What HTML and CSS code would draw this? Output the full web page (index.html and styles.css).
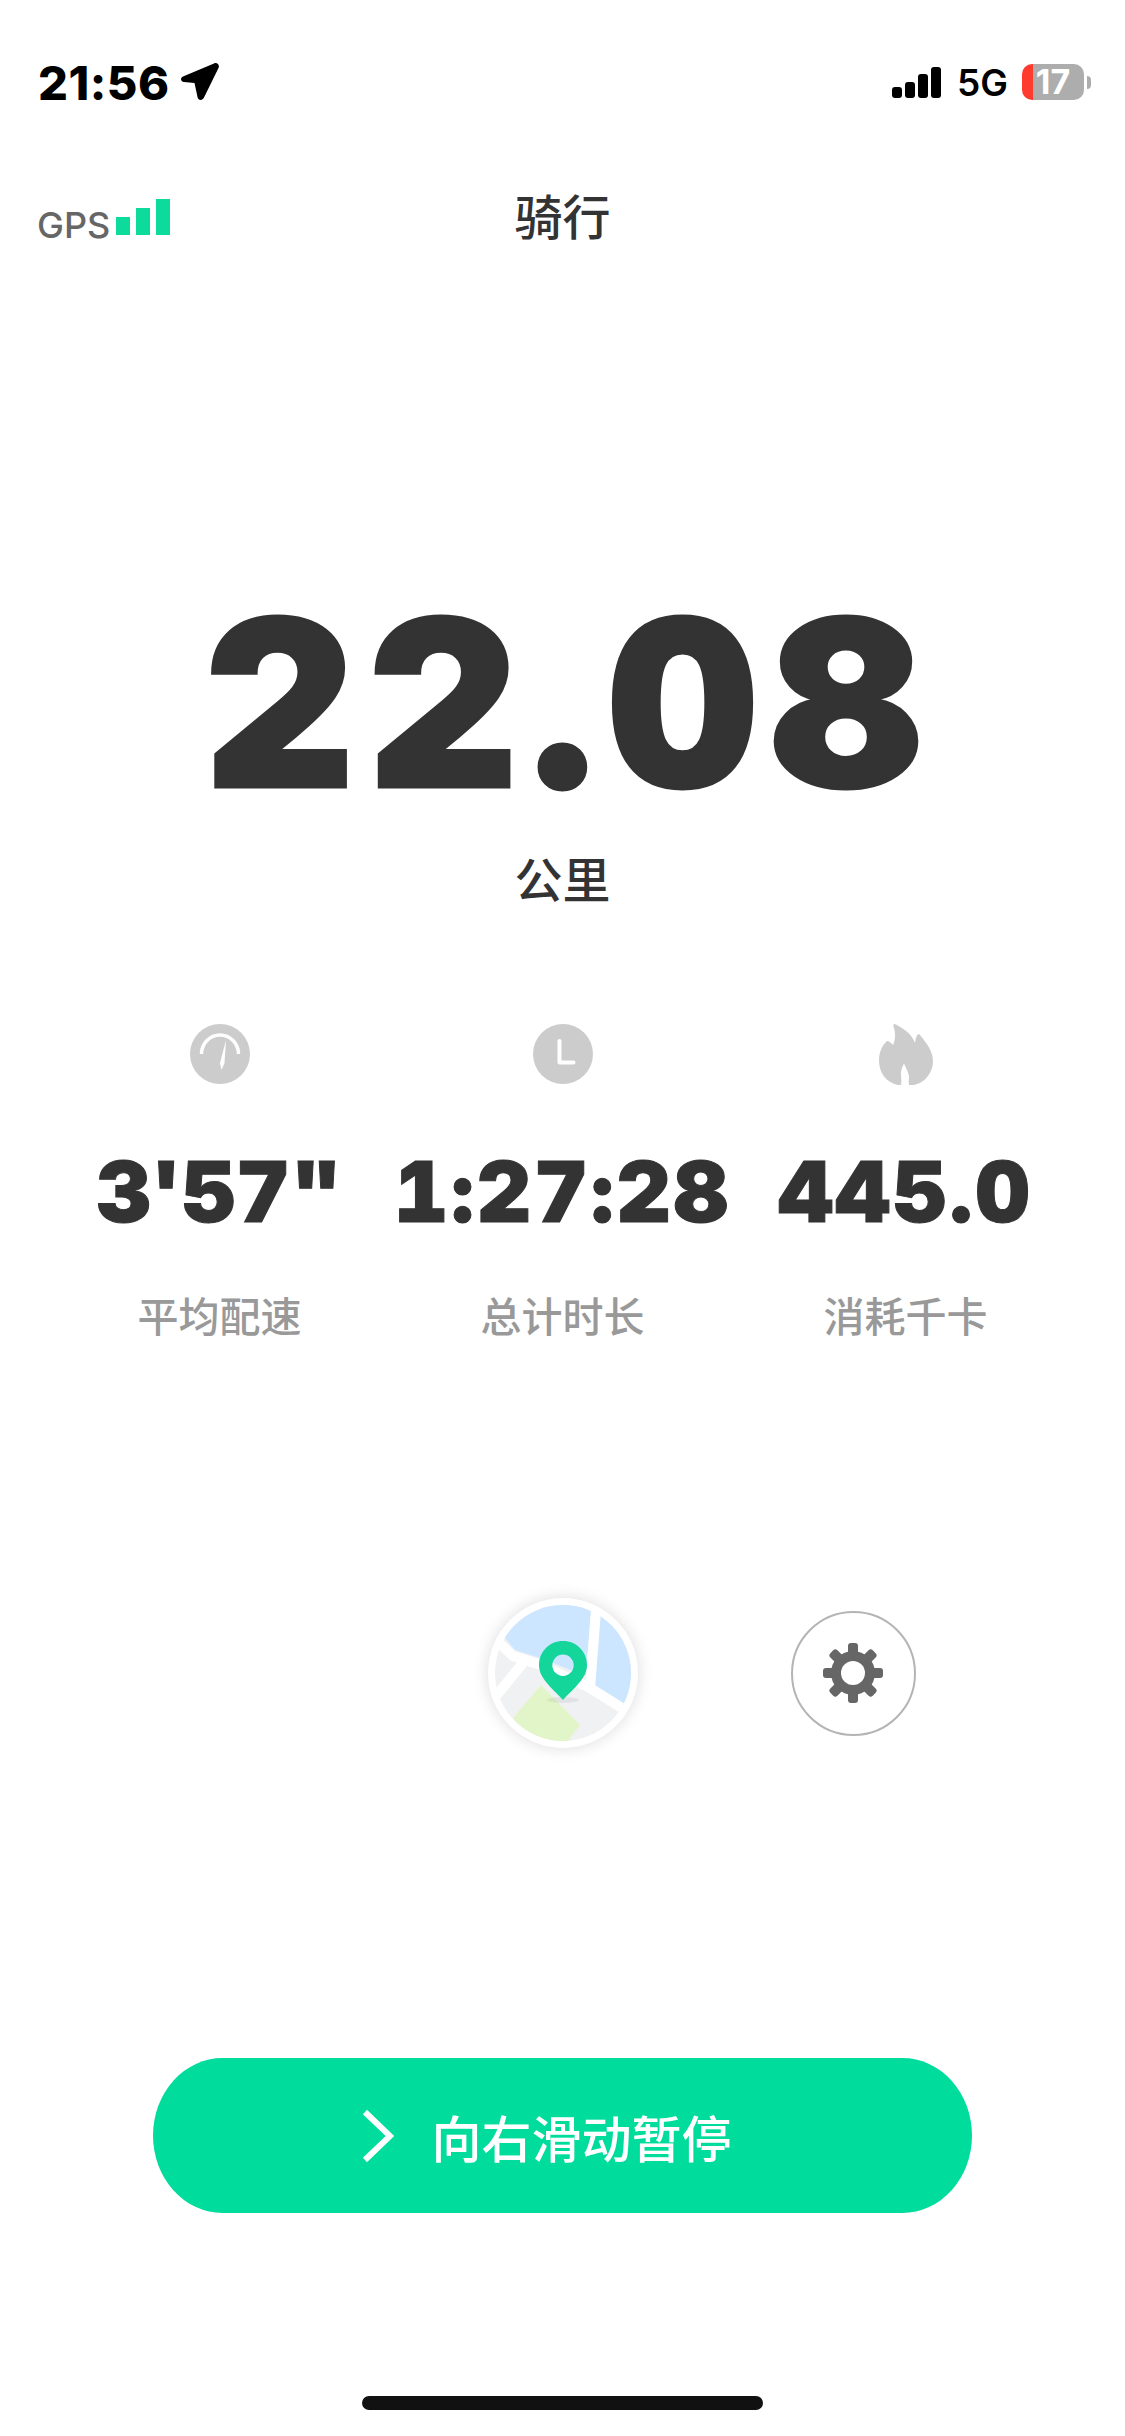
FILE: index.html
```html
<!DOCTYPE html>
<html lang="zh-CN">
<head>
    <meta charset="UTF-8">
    <title>骑行</title>
    <link rel="stylesheet" href="styles.css">
</head>
<body>
    <div class="screen">
        <div class="status-bar">
            <div class="status-left">
                <span class="clock">21:56</span>
                <svg class="arrow" width="40" height="38" viewBox="0 0 40 38"><path d="M34 .5 3 13.500c-3 1.500-2.500 5 1 5.500l10.500 1 3 14c.5 3.500 5 4 6.500 .5L38.500 5c1.500-3-1.500-6-4.500-4.500Z"/></svg>
            </div>
            <div class="status-right">
                <div class="signal"><i class="s1"></i><i class="s2"></i><i class="s3"></i><i class="s4"></i></div>
                <span class="network">5G</span>
                <div class="battery"><span>17</span></div>
                <div class="battery-nub"></div>
            </div>
        </div>

        <div class="nav">
            <div class="gps">
                <span>GPS</span>
                <div class="gps-bars"><i class="g1"></i><i class="g2"></i><i class="g3"></i></div>
            </div>
            <div class="title">骑行</div>
        </div>

        <div class="distance">22.08</div>
        <div class="unit">公里</div>

        <div class="stats">
            <div class="stat">
                <svg width="60" height="62" viewBox="0 0 60 62">
                    <circle cx="30" cy="31" r="30" fill="#ccc"/>
                    <path d="M11.500 31a18.500 19 0 0 1 37 0" fill="none" stroke="#fff" stroke-width="3.500"/>
                    <path d="M36 17 34.500 40 31.500 47 30 40Z" fill="#fff"/>
                </svg>
                <div class="stat-value stat-value-tight">3'57"</div>
                <div class="stat-label">平均配速</div>
            </div>
            <div class="stat">
                <svg width="60" height="62" viewBox="0 0 60 62">
                    <circle cx="30" cy="31" r="30" fill="#ccc"/>
                    <path d="M26.500 18v21.500h14" fill="none" stroke="#fff" stroke-width="4" stroke-linecap="round" stroke-linejoin="round"/>
                </svg>
                <div class="stat-value">1:27:28</div>
                <div class="stat-label">总计时长</div>
            </div>
            <div class="stat">
                <svg width="60" height="62" viewBox="0 0 60 62">
                    <path d="M18 .7c9 4 18 10 21 19.300.5-3 1.500-9 4-9 7 8 14 17 14 27 0 13-10 24-23 24.500-1.500 0-1.500-3-1-8 .3-4-3-9-5-14-2 4-3.500 8-3 12 .3 4 1 10-1 10C10 60 3 50 3 37c0-7 3-15 8-19 2 0 4 2 6 4 2-4 3-11 1-17-1-2-1-4 1-4.300Z" fill="#ccc"/>
                </svg>
                <div class="stat-value">445.0</div>
                <div class="stat-label">消耗千卡</div>
            </div>
        </div>

        <div class="controls">
            <div class="map-btn">
                <svg width="136" height="136" viewBox="7 7 136 136">
                    <defs><clipPath id="mapClip"><circle cx="75" cy="75" r="68"/></clipPath></defs>
                    <g clip-path="url(#mapClip)">
                        <rect width="150" height="150" fill="#f0f1f3"/>
                        <path d="M17 40 27 52 52 60 98 78 103 13 90 0 0 0Z" fill="#cce6ff"/>
                        <path d="M114 0 105 88 135 107 150 100 150 0Z" fill="#cce6ff"/>
                        <path d="M53 87 92 127 80 143 80 150 45 150 25 120Z" fill="#e2f5c8"/>
                        <path d="M8 42 25 58 50 66 102 90 145 117" fill="none" stroke="#fff" stroke-width="10"/>
                        <path d="M35 65 3 104" fill="none" stroke="#fff" stroke-width="10"/>
                        <path d="M109 0 102 90" fill="none" stroke="#fff" stroke-width="10"/>
                    </g>
                    <ellipse cx="75" cy="102" rx="16" ry="3" fill="#000" opacity="0.06"/>
                    <path fill="#14d69b" fill-rule="evenodd" d="M75 43c13.500 0 24 10.500 24 24 0 13-12 22-24 35-12-13-24-22-24-35 0-13.500 10.500-24 24-24Zm0 13.500a10.700 10.700 0 1 0 0 21.400 10.700 10.700 0 0 0 0-21.400Z"/>
                </svg>
            </div>
            <div class="settings-btn">
                <svg width="62" height="62" viewBox="-31 -31 62 62">
                    <g fill="#666">
                        <rect x="-5" y="-30" width="10" height="60" rx="3"/>
                        <rect x="-5" y="-30" width="10" height="60" rx="3" transform="rotate(45)"/>
                        <rect x="-5" y="-30" width="10" height="60" rx="3" transform="rotate(90)"/>
                        <rect x="-5" y="-30" width="10" height="60" rx="3" transform="rotate(135)"/>
                        <circle r="22"/>
                    </g>
                    <circle r="12" fill="#fff"/>
                </svg>
            </div>
        </div>

        <div class="slide-btn">
            <svg width="32" height="52" viewBox="0 0 32 52"><path d="M3 2 28 26 3 50" fill="none" stroke="#fff" stroke-width="6"/></svg>
            <span>向右滑动暂停</span>
        </div>

        <div class="home-indicator"></div>
    </div>
</body>
</html>
```

FILE: styles.css
```css
* {
    box-sizing: border-box;
}

body {
    margin: 0;
    background: #fff;
    font-family: 'Inter', 'Noto Sans CJK SC', sans-serif;
}

.screen {
    width: 1125px;
    height: 2436px;
    display: flex;
    flex-direction: column;
    align-items: center;
    overflow: hidden;
}

/* status bar */
.status-bar {
    width: 100%;
    height: 64px;
    margin-top: 50px;
    padding: 0 34px 0 38px;
    display: flex;
    justify-content: space-between;
    align-items: center;
}

.status-left, .status-right {
    display: flex;
    align-items: center;
}

.clock {
    font-size: 47px;
    font-weight: 800;
    color: #000;
    letter-spacing: 0.5px;
}

.arrow {
    margin-left: 10px;
}

.signal {
    display: flex;
    align-items: flex-end;
    gap: 3px;
    height: 31px;
}

.signal i {
    display: block;
    width: 10px;
    background: #000;
    border-radius: 3px;
}

.s1 { height: 11px; }
.s2 { height: 16px; }
.s3 { height: 24px; }
.s4 { height: 31px; }

.network {
    margin-left: 16px;
    font-size: 37px;
    font-weight: 600;
    color: #000;
}

.battery {
    margin-left: 14px;
    width: 62px;
    height: 36px;
    border-radius: 10px;
    background: linear-gradient(to right, #ff3b30 11px, #adadad 11px);
    color: #fff;
    font-size: 34px;
    font-weight: 700;
    line-height: 36px;
    text-align: center;
}

.battery-nub {
    width: 4px;
    height: 13px;
    margin-left: 3px;
    background: #adadad;
    border-radius: 0 4px 4px 0;
}

/* nav */
.nav {
    width: 100%;
    height: 64px;
    margin-top: 65px;
    display: grid;
    grid-template-columns: 1fr auto 1fr;
    align-items: center;
    color: #333;
}

.gps {
    display: flex;
    align-items: flex-end;
    gap: 6px;
    margin-top: 16px;
    padding-left: 37px;
    font-size: 36px;
    font-weight: 500;
    color: #666;
    line-height: 40px;
}

.gps-bars {
    display: flex;
    align-items: flex-end;
    gap: 6px;
    height: 36px;
    margin-bottom: 10px;
}

.gps-bars i {
    display: block;
    width: 14px;
    background: #0cdb9b;
}

.g1 { height: 18px; }
.g2 { height: 27px; }
.g3 { height: 36px; }

.title {
    font-size: 48px;
    font-weight: 500;
}

/* distance */
.distance {
    margin-top: 340px;
    margin-left: 14px;
    height: 240px;
    font-size: 232px;
    line-height: 240px;
    font-weight: 900;
    font-variant-numeric: tabular-nums;
    letter-spacing: 14px;
    color: #333;
    -webkit-text-stroke: 3px #333;
}

.unit {
    margin-top: 24px;
    font-size: 48px;
    line-height: 68px;
    color: #333;
    font-weight: 500;
}

/* stats */
.stats {
    margin-top: 108px;
    display: grid;
    grid-template-columns: repeat(3, 343px);
}

.stat {
    display: flex;
    flex-direction: column;
    align-items: center;
}

.stat-value {
    margin-top: 55px;
    font-size: 84px;
    line-height: 104px;
    font-weight: 900;
    font-variant-numeric: tabular-nums;
    letter-spacing: 3px;
    color: #333;
    -webkit-text-stroke: 1px #333;
    white-space: nowrap;
}

.stat-value-tight {
    letter-spacing: 0;
}

.stat-label {
    margin-top: 44px;
    font-size: 41px;
    font-weight: 500;
    line-height: 58px;
    color: #999;
}

/* map + settings */
.controls {
    width: 100%;
    margin-top: 252px;
    display: grid;
    grid-template-columns: 1fr 150px 1fr;
    align-items: center;
}

.map-btn {
    grid-column: 2;
    width: 150px;
    height: 150px;
    border-radius: 50%;
    background: #fff;
    box-shadow: 0 0 16px rgba(0, 0, 0, 0.14);
    display: flex;
    align-items: center;
    justify-content: center;
}

.settings-btn {
    width: 125px;
    height: 125px;
    margin-left: 153px;
    border-radius: 50%;
    border: 2px solid #b4b4b4;
    display: flex;
    align-items: center;
    justify-content: center;
}

/* slide button */
.slide-btn {
    margin-top: 310px;
    width: 819px;
    height: 155px;
    border-radius: 70px / 78px;
    background: #00dc9b;
    color: #fff;
    display: flex;
    align-items: center;
    justify-content: center;
    gap: 38px;
    font-size: 50px;
    font-weight: 500;
    padding-right: 32px;
}

.home-indicator {
    margin-top: 183px;
    width: 401px;
    height: 14px;
    border-radius: 7px;
    background: #111;
}
```
